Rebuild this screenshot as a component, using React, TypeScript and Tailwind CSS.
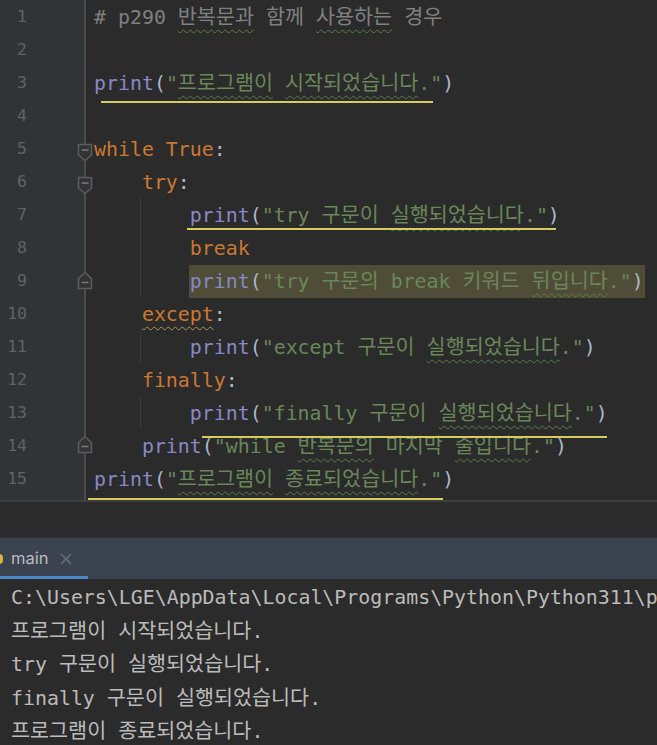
import type { ReactNode } from 'react';

// [text, colour class, wavy decoration class]
type Seg = [string, string?, string?];

const C = 'text-[#808080]';
const P = 'text-[#8888c6]';
const D = 'text-[#a9b7c6]';
const S = 'text-[#6a8759]';
const K = 'text-[#cc7832]';
const WG = 'underline decoration-wavy decoration-1 underline-offset-[5px] decoration-[#5b7d4c]';
const WY = 'underline decoration-wavy decoration-1 underline-offset-[5px] decoration-[#a39a55]';

function ko(s: string) {
  return s.split(/([\uAC00-\uD7A3]+)/).map((p, i) =>
    /[\uAC00-\uD7A3]/.test(p) ? (
      <span key={i} className="text-[20.7px]">
        {p}
      </span>
    ) : (
      p
    ),
  );
}

const code: Seg[][] = [
  [['# p290 ', C], ['반복문과', C, WG], [' 함께 ', C], ['사용하는', C, WG], [' 경우', C]],
  [],
  [['print', P], ['(', D], ['"', S], ['프로그램이', S, WG], [' ', S], ['시작되었습니다', S, WG], ['."', S], [')', D]],
  [],
  [['while True', K], [':', D]],
  [['    try', K], [':', D]],
  [['        '], ['print', P], ['(', D], ['"try 구문이 ', S], ['실행되었습니다', S, WG], ['."', S], [')', D]],
  [['        break', K]],
  [['        '], ['print', P], ['(', D], ['"try 구문의 break 키워드 ', S], ['뒤입니다', S, WG], ['."', S], [')', D]],
  [['    '], ['except', K, WY], [':', D]],
  [['        '], ['print', P], ['(', D], ['"except 구문이 ', S], ['실행되었습니다', S, WG], ['."', S], [')', D]],
  [['    finally', K], [':', D]],
  [['        '], ['print', P], ['(', D], ['"finally 구문이 ', S], ['실행되었습니다', S, WG], ['."', S], [')', D]],
  [['    '], ['print', P], ['(', D], ['"while ', S], ['반복문의', S, WG], [' 마지막 ', S], ['줄입니다', S, WG], ['."', S], [')', D]],
  [['print', P], ['(', D], ['"', S], ['프로그램이', S, WG], [' ', S], ['종료되었습니다', S, WG], ['."', S], [')', D]],
];

const output = [
  'C:\\Users\\LGE\\AppData\\Local\\Programs\\Python\\Python311\\python.exe',
  '프로그램이 시작되었습니다.',
  'try 구문이 실행되었습니다.',
  'finally 구문이 실행되었습니다.',
  '프로그램이 종료되었습니다.',
];

function renderSegs(segs: Seg[]): ReactNode[] {
  return segs.map(([t, c, w], i) => (
    <span key={i} className={[c, w].filter(Boolean).join(' ')}>
      {ko(t)}
    </span>
  ));
}

function FoldStart() {
  return (
    <svg width="16" height="19" viewBox="0 0 16 19">
      <path d="M1.5 1.5H14.5V12L8 17.5L1.5 12Z" fill="#313335" stroke="#5c5c5c" strokeWidth="1.5" />
      <path d="M4.5 7H11.5" stroke="#7c7c7c" strokeWidth="1.5" />
    </svg>
  );
}

function FoldEnd() {
  return (
    <svg width="16" height="19" viewBox="0 0 16 19">
      <path d="M1.5 17.5H14.5V7.5L8 1.5L1.5 7.5Z" fill="#313335" stroke="#5c5c5c" strokeWidth="1.5" />
      <path d="M4.5 11.5H11.5" stroke="#7c7c7c" strokeWidth="1.5" />
    </svg>
  );
}

export default function App() {
  return (
    <div className="w-[657px] h-[745px] overflow-hidden bg-[#2b2b2b] flex flex-col font-['DejaVu_Sans_Mono','Noto_Sans_CJK_KR',monospace]">
      {/* Editor */}
      <div className="relative flex h-[500px] shrink-0">
        <div className="relative w-[86px] shrink-0 bg-[#313335] border-r-2 border-[#4d4d4d]">
          {code.map((_, i) => (
            <div key={i} className="h-[33px] w-[27px] text-right text-[16.5px] leading-[33px] text-[#606366]">
              {i + 1}
            </div>
          ))}
          <div className="absolute left-[77px] top-[143px]">
            <FoldStart />
          </div>
          <div className="absolute left-[77px] top-[176px]">
            <FoldStart />
          </div>
          <div className="absolute left-[77px] top-[271px]">
            <FoldEnd />
          </div>
          <div className="absolute left-[77px] top-[435px]">
            <FoldEnd />
          </div>
        </div>

        <div className="flex-1 pl-[8px] pt-px text-[19.9px] leading-[33px] whitespace-pre overflow-hidden">
          {code.map((segs, i) => (
            <div key={i} className="h-[33px]">
              {i === 8 ? (
                <>
                  {renderSegs(segs.slice(0, 1))}
                  <span className="inline-block h-[33px] bg-[#4f4d37] -ml-px pl-px pr-px">{renderSegs(segs.slice(1))}</span>
                </>
              ) : (
                renderSegs(segs)
              )}
            </div>
          ))}
        </div>

        {/* indent guides */}
        <div className="absolute left-[140px] top-[198px] h-[99px] w-px bg-[#3b3b3b]" />
        <div className="absolute left-[140px] top-[330px] h-[33px] w-px bg-[#3b3b3b]" />
        <div className="absolute left-[140px] top-[396px] h-[33px] w-px bg-[#3b3b3b]" />

        {/* usage underlines */}
        <div className="absolute left-[101px] top-[101px] h-[2px] w-[332px] bg-[#d6cc62]" />
        <div className="absolute left-[187px] top-[228px] h-[2px] w-[369px] bg-[#d6cc62]" />
        <div className="absolute left-[202px] top-[436px] h-[2px] w-[405px] bg-[#d6cc62]" />
        <div className="absolute left-[88px] top-[498px] h-[2px] w-[355px] bg-[#d6cc62]" />
      </div>

      <div className="h-[2px] shrink-0 bg-[#3c3f41]" />
      <div className="h-[35px] shrink-0 bg-[#2b2b2b]" />
      <div className="h-px shrink-0 bg-[#323232]" />

      {/* Run tool window tabs */}
      <div className="h-[41px] shrink-0 bg-[#3b4351] flex">
        <div className="w-[88px] flex flex-col">
          <div className="flex-1 flex items-center pt-[3px] font-['Inter',sans-serif]">
            <svg width="10" height="10" viewBox="0 0 10 10" className="-ml-[7px]">
              <rect x="0" y="0" width="10" height="10" rx="4" fill="#d9b43c" />
            </svg>
            <span className="ml-[8px] text-[16.5px] text-[#bbbbbb]">main</span>
            <svg width="12" height="12" viewBox="0 0 12 12" className="ml-[12px]">
              <path d="M1 1L11 11M11 1L1 11" stroke="#6e7276" strokeWidth="1.4" />
            </svg>
          </div>
          <div className="h-[3px] bg-[#4a88c7]" />
        </div>
      </div>

      {/* Console */}
      <div className="flex-1 pt-[3px] pl-[11px] text-[19.9px] leading-[32.5px] text-[#bbbbbb] whitespace-pre overflow-hidden">
        {output.map((l, i) => (
          <div key={i}>{ko(l)}</div>
        ))}
      </div>
    </div>
  );
}
